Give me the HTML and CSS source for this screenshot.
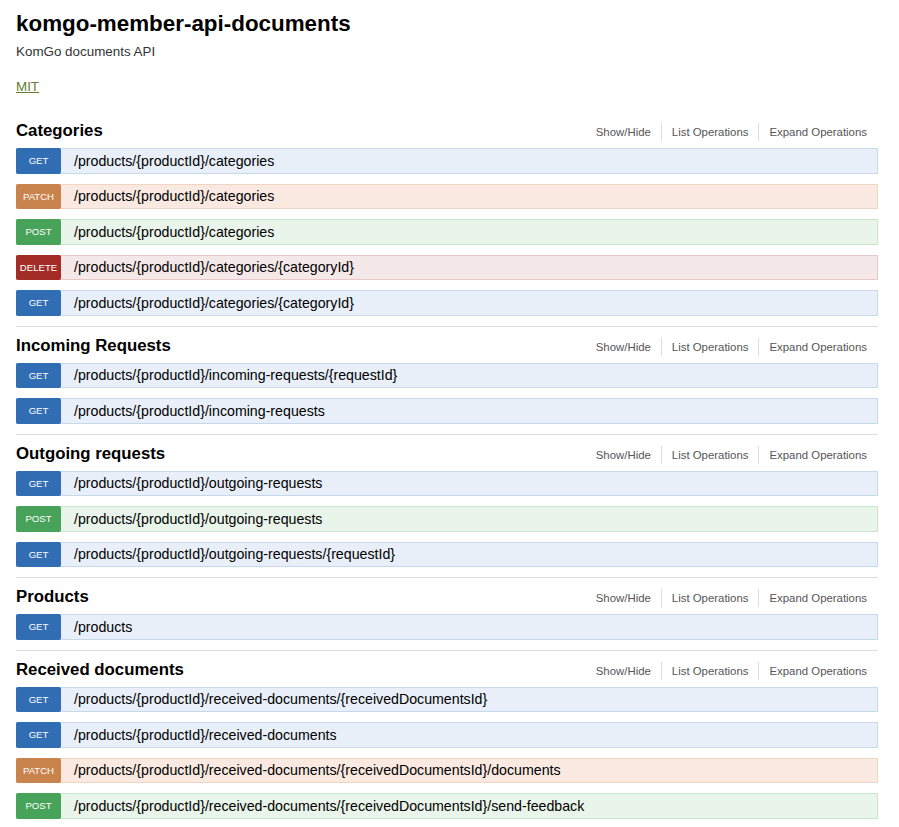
FILE: index.html
```html
<!DOCTYPE html>
<html>
<head>
<meta charset="utf-8">
<link rel="stylesheet" href="styles.css">
</head>
<body>
<div class="wrap">
  <div class="info">
    <h1 class="title">komgo-member-api-documents</h1>
    <div class="desc">KomGo documents API</div>
    <div class="license"><a href="#">MIT</a></div>
  </div>
  <ul class="resources">
    <li class="resource">
      <div class="res-head">
        <h2>Categories</h2>
        <ul class="options"><li>Show/Hide</li><li>List Operations</li><li>Expand Operations</li></ul>
      </div>
      <ul class="ops">
        <li class="op get"><span class="method">GET</span><span class="path">/products/{productId}/categories</span></li>
        <li class="op patch"><span class="method">PATCH</span><span class="path">/products/{productId}/categories</span></li>
        <li class="op post"><span class="method">POST</span><span class="path">/products/{productId}/categories</span></li>
        <li class="op delete"><span class="method">DELETE</span><span class="path">/products/{productId}/categories/{categoryId}</span></li>
        <li class="op get"><span class="method">GET</span><span class="path">/products/{productId}/categories/{categoryId}</span></li>
      </ul>
    </li>
    <li class="resource">
      <div class="res-head">
        <h2>Incoming Requests</h2>
        <ul class="options"><li>Show/Hide</li><li>List Operations</li><li>Expand Operations</li></ul>
      </div>
      <ul class="ops">
        <li class="op get"><span class="method">GET</span><span class="path">/products/{productId}/incoming-requests/{requestId}</span></li>
        <li class="op get"><span class="method">GET</span><span class="path">/products/{productId}/incoming-requests</span></li>
      </ul>
    </li>
    <li class="resource">
      <div class="res-head">
        <h2>Outgoing requests</h2>
        <ul class="options"><li>Show/Hide</li><li>List Operations</li><li>Expand Operations</li></ul>
      </div>
      <ul class="ops">
        <li class="op get"><span class="method">GET</span><span class="path">/products/{productId}/outgoing-requests</span></li>
        <li class="op post"><span class="method">POST</span><span class="path">/products/{productId}/outgoing-requests</span></li>
        <li class="op get"><span class="method">GET</span><span class="path">/products/{productId}/outgoing-requests/{requestId}</span></li>
      </ul>
    </li>
    <li class="resource">
      <div class="res-head">
        <h2>Products</h2>
        <ul class="options"><li>Show/Hide</li><li>List Operations</li><li>Expand Operations</li></ul>
      </div>
      <ul class="ops">
        <li class="op get"><span class="method">GET</span><span class="path">/products</span></li>
      </ul>
    </li>
    <li class="resource">
      <div class="res-head">
        <h2>Received documents</h2>
        <ul class="options"><li>Show/Hide</li><li>List Operations</li><li>Expand Operations</li></ul>
      </div>
      <ul class="ops">
        <li class="op get"><span class="method">GET</span><span class="path">/products/{productId}/received-documents/{receivedDocumentsId}</span></li>
        <li class="op get"><span class="method">GET</span><span class="path">/products/{productId}/received-documents</span></li>
        <li class="op patch"><span class="method">PATCH</span><span class="path">/products/{productId}/received-documents/{receivedDocumentsId}/documents</span></li>
        <li class="op post"><span class="method">POST</span><span class="path">/products/{productId}/received-documents/{receivedDocumentsId}/send-feedback</span></li>
      </ul>
    </li>
  </ul>
</div>
</body>
</html>
```

FILE: styles.css
```css
html, body {
  margin: 0;
  padding: 0;
  background: #fff;
}
body {
  font-family: "Liberation Sans", Arial, Helvetica, sans-serif;
  color: #000;
}
.wrap {
  width: 862px;
  padding: 10px 21px 0 16px;
}
.title {
  margin: 0;
  font-size: 22.4px;
  line-height: 28px;
  font-weight: bold;
  color: #000;
}
.desc {
  margin-top: 6px;
  font-size: 13.4px;
  line-height: 16px;
  color: #333;
}
.license {
  margin-top: 19px;
  font-size: 13.4px;
  line-height: 16px;
}
.license a {
  color: #5f8030;
  text-decoration: underline;
}
.resources {
  list-style: none;
  margin: 17px 0 0 0;
  padding: 0;
}
.resource {
  border-bottom: 1px solid #ddd;
}
.res-head {
  display: flex;
  justify-content: space-between;
  align-items: flex-start;
  height: 20px;
  padding-top: 9px;
  margin-bottom: 7px;
}
.res-head h2 {
  margin: 0;
  font-size: 16.8px;
  line-height: 20px;
  font-weight: bold;
  color: #000;
}
.options {
  list-style: none;
  display: flex;
  margin: 2px 0 0 0;
  padding: 0;
}
.options li {
  padding: 2px 10px;
  font-size: 11.4px;
  line-height: 14px;
  color: #555;
  border-right: 1px solid #ddd;
}
.options li:last-child {
  border-right: none;
  padding-right: 11px;
}
.ops {
  list-style: none;
  margin: 0;
  padding: 0;
}
.op {
  display: flex;
  align-items: stretch;
  height: 25.5px;
  box-sizing: border-box;
  border: 1px solid #c5d8ec;
  margin-bottom: 10px;
}
.method {
  display: flex;
  align-items: center;
  justify-content: center;
  width: 45px;
  margin: -1px 0 -1px -1px;
  border-radius: 2px;
  color: #fff;
  font-size: 9.6px;
  text-transform: uppercase;
}
.path {
  display: flex;
  align-items: center;
  padding-left: 13px;
  font-size: 14.2px;
  color: #000;
}
.get { background: #e8eff8; border-color: #c5d8ec; }
.get .method { background: #316db3; }
.patch { background: #f9e9e0; border-color: #f1d5c4; }
.patch .method { background: #c9834c; }
.post { background: #e9f4ea; border-color: #c8e5cd; }
.post .method { background: #48a35a; }
.delete { background: #f5e8e8; border-color: #e8c8c8; }
.delete .method { background: #a32c27; }
```
